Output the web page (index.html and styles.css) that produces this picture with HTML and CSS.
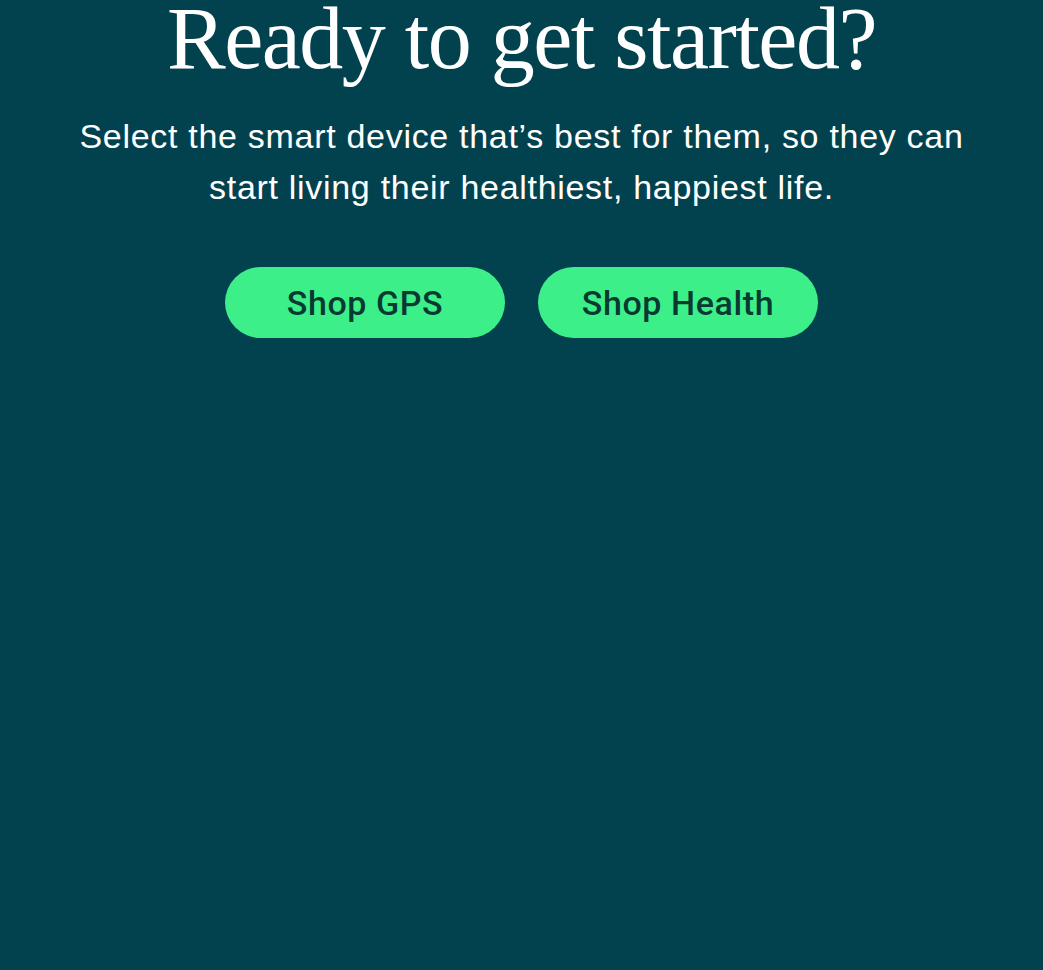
FILE: index.html
```html
<!DOCTYPE html>
<html lang="en">
<head>
<meta charset="utf-8">
<title>Ready to get started?</title>
<link rel="stylesheet" href="styles.css">
</head>
<body>
<section class="cta">
  <h1 class="cta-title">Ready to get started?</h1>
  <p class="cta-text">Select the smart device that’s best for them, so they can start living their healthiest, happiest life.</p>
  <div class="cta-actions">
    <a class="btn" href="#">Shop GPS</a>
    <a class="btn" href="#">Shop Health</a>
  </div>
</section>
</body>
</html>
```

FILE: styles.css
```css
html, body {
  margin: 0;
  padding: 0;
  background: #02424f;
  height: 100%;
}
body {
  color: #ffffff;
  font-family: "Liberation Sans", Arial, sans-serif;
}
.cta {
  display: flex;
  flex-direction: column;
  align-items: center;
  text-align: center;
}
.cta-title {
  margin: 0;
  font-family: "Liberation Serif", "Times New Roman", serif;
  font-weight: 400;
  font-size: 88px;
  line-height: 78px;
  letter-spacing: -1.5px;
}
.cta-text {
  margin: 33px 0 0;
  width: 920px;
  font-size: 34px;
  line-height: 51px;
  letter-spacing: 0.7px;
}
.cta-actions {
  display: flex;
  gap: 33px;
  margin-top: 54px;
}
.btn {
  display: flex;
  align-items: center;
  justify-content: center;
  width: 280px;
  height: 71px;
  border-radius: 36px;
  background: #3def88;
  color: #083a33;
  font-family: Roboto, "Liberation Sans", sans-serif;
  font-weight: 500;
  font-size: 34px;
  letter-spacing: 0.6px;
  text-decoration: none;
}
```
